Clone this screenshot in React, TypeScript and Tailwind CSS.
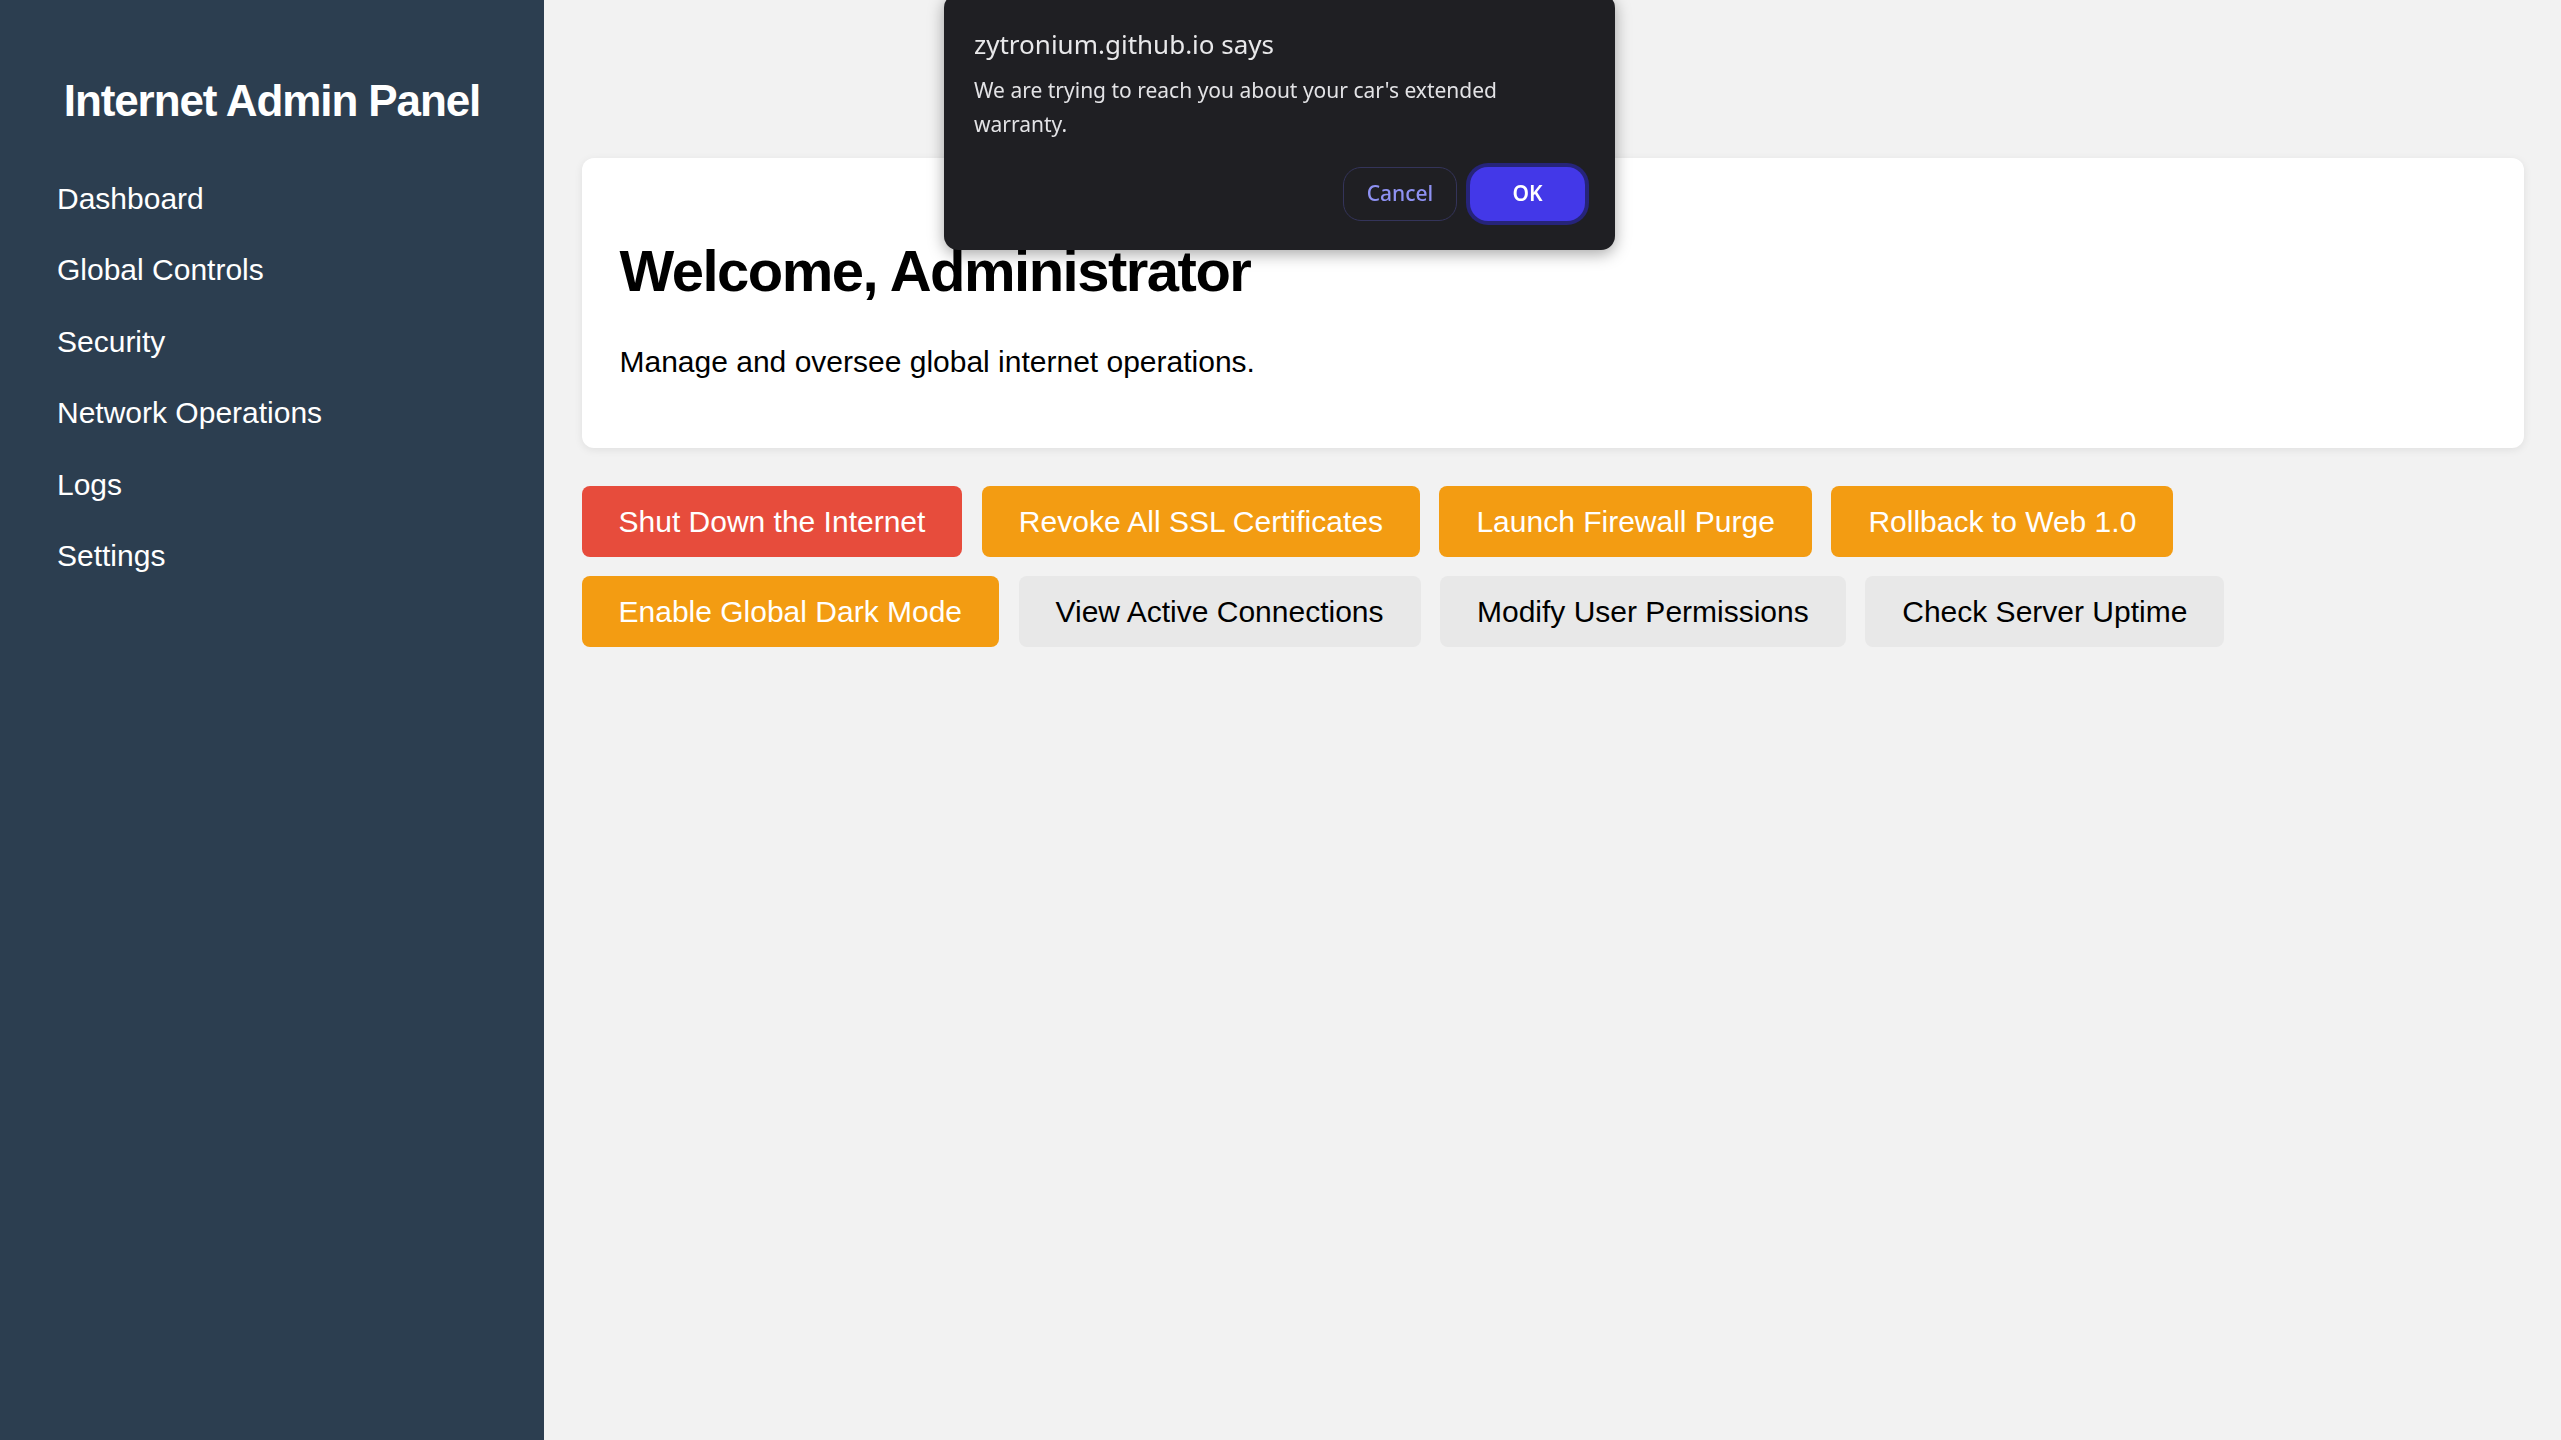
import React from "react";

const NAV_ITEMS = [
  "Dashboard",
  "Global Controls",
  "Security",
  "Network Operations",
  "Logs",
  "Settings",
];

type Action = {
  label: string;
  tone: "danger" | "warning" | "neutral";
};

const ACTIONS: Action[] = [
  { label: "Shut Down the Internet", tone: "danger" },
  { label: "Revoke All SSL Certificates", tone: "warning" },
  { label: "Launch Firewall Purge", tone: "warning" },
  { label: "Rollback to Web 1.0", tone: "warning" },
  { label: "Enable Global Dark Mode", tone: "warning" },
  { label: "View Active Connections", tone: "neutral" },
  { label: "Modify User Permissions", tone: "neutral" },
  { label: "Check Server Uptime", tone: "neutral" },
];

const TONES = {
  danger: "bg-[#e74c3c] text-white",
  warning: "bg-[#f39c12] text-white",
  neutral: "bg-[#e8e8e8] text-black",
};

function Sidebar() {
  return (
    <aside className="w-[544px] shrink-0 bg-[#2c3e50] pt-[76px] text-white">
      <h2 className="text-center text-[44px] font-bold leading-[50px] tracking-[-1.1px]">
        Internet Admin Panel
      </h2>
      <ul className="mt-[37px] pl-[57px]">
        {NAV_ITEMS.map((item) => (
          <li key={item} className="py-[18.5px] text-[30px] leading-[34.5px]">
            {item}
          </li>
        ))}
      </ul>
    </aside>
  );
}

function AlertDialog() {
  return (
    <div
      className="fixed left-[944px] top-[-6px] w-[671px] rounded-[14px] bg-[#1f1f23] px-[30px] pb-[29px] pt-[33px] shadow-[0_4px_16px_rgba(0,0,0,0.35)]"
      style={{ fontFamily: '"Noto Sans", "Open Sans", sans-serif' }}
    >
      <div className="text-[26px] leading-[34px] text-[#e8e8ea]">
        zytronium.github.io says
      </div>
      <p className="mt-[12px] text-[21px] leading-[34px] text-[#e3e3e6]">
        We are trying to reach you about your car's extended
        <br />
        warranty.
      </p>
      <div className="mt-[26px] flex justify-end gap-[13px]">
        <button className="h-[54px] w-[114px] rounded-[18px] border border-[#34345a] text-[21px] font-medium text-[#8e91f2]">
          Cancel
        </button>
        <button className="h-[54px] w-[115px] rounded-[18px] bg-[#4338e8] text-[21px] font-semibold text-white ring-[4px] ring-[#26247a]">
          OK
        </button>
      </div>
    </div>
  );
}

export default function App() {
  return (
    <div
      className="flex h-[1440px] w-full"
      style={{ fontFamily: '"Liberation Sans", Arial, sans-serif' }}
    >
      <Sidebar />
      <main className="flex-1 bg-[#f2f2f2] px-[37.5px] pt-[158px]">
        <section className="rounded-[12px] bg-white px-[38px] pb-[38px] pt-[80px] shadow-[0_2px_8px_rgba(0,0,0,0.08)]">
          <h1 className="text-[58px] font-bold leading-[66px] tracking-[-1.5px] text-black">
            Welcome, Administrator
          </h1>
          <p className="mb-[30px] mt-[41px] text-[30px] leading-[34.5px] text-black">
            Manage and oversee global internet operations.
          </p>
        </section>
        <div className="mt-[38px] flex flex-wrap gap-[19.5px]">
          {ACTIONS.map((action) => (
            <button
              key={action.label}
              className={`rounded-[8px] px-[37px] py-[18px] text-[30px] leading-[35px] ${TONES[action.tone]}`}
            >
              {action.label}
            </button>
          ))}
        </div>
      </main>
      <AlertDialog />
    </div>
  );
}
